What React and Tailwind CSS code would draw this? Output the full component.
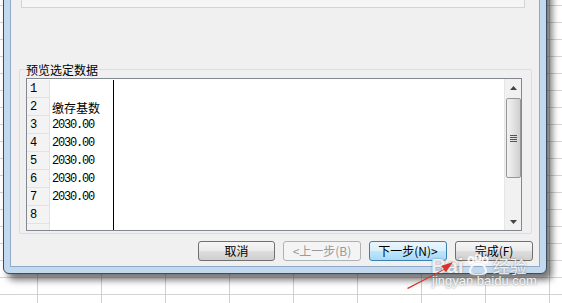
import React from "react";

const cjk = "font-['SimSun','Noto_Sans_CJK_SC',sans-serif]";

function Btn({ children, kind = "normal", w = "w-[77px]" }) {
  const styles = {
    normal:
      "border-[#707070] bg-[linear-gradient(to_bottom,#f6f6f6_0%,#ebebeb_48%,#dddddd_52%,#cfcfcf_100%)] text-black",
    disabled: "border-[#adb2b5] bg-[#f4f4f4] text-[#9a9a9a]",
    focus:
      "border-[#3c7fb1] bg-[linear-gradient(to_bottom,#eaf6fd_0%,#d9f0fc_48%,#bee6fd_52%,#a7d9f5_100%)] text-black",
  };
  return (
    <div
      className={`${w} h-[20px] rounded-[3px] border flex items-center justify-center text-[12px] leading-none ${cjk} ${styles[kind]}`}
    >
      {children}
    </div>
  );
}

const rows = [
  ["1", ""],
  ["2", "缴存基数"],
  ["3", "2030.00"],
  ["4", "2030.00"],
  ["5", "2030.00"],
  ["6", "2030.00"],
  ["7", "2030.00"],
  ["8", ""],
  ["", ""],
];

export default function App() {
  return (
    <div className="relative w-[562px] h-[303px] overflow-hidden bg-white bg-[linear-gradient(to_right,#cfcfcf_1px,transparent_1px),linear-gradient(to_bottom,#d4d4d4_1px,transparent_1px)] bg-[size:64px_17px] bg-[position:37px_5px]">
      {/* dialog window */}
      <div className="absolute left-[3px] top-[-30px] w-[544px] h-[304px] rounded-b-[6px] border border-[#3e4d5e] bg-[#c3d9ef] p-[6px] shadow-[5px_6px_7px_rgba(0,0,0,0.55)]">
        <div className="w-full h-full border border-[#8eaac8] bg-[#f0f0f0] flex flex-col">
          {/* previous panel (cut off at top) */}
          <div className="ml-[10px] w-[504px] h-[30px] border border-[#d4d4d4] bg-[#f5f5f5]" />

          {/* group box */}
          <div className="relative ml-[8px] mt-[61px] w-[513px] h-[165px] border border-[#d5dfe5] rounded-[2px]">
            <span className={`absolute left-[5px] top-[-7px] px-[1px] bg-[#f0f0f0] text-[12px] leading-[14px] text-black ${cjk}`}>
              预览选定数据
            </span>

            <div className="ml-[6px] mt-[8px] w-[496px] h-[153px] border border-[#828790] bg-white flex overflow-hidden">
              <div className="flex flex-col pt-[1px]">
                {rows.map(([n, v], i) => (
                  <div key={i} className="flex h-[18px] shrink-0">
                    <div className="w-[23px] h-[18px] bg-[#f3f3f3] border-b border-r border-[#e2e2e2] pl-[3px] text-[12px] leading-[18px] text-black font-['Liberation_Mono',monospace]">
                      {n}
                    </div>
                    <div
                      className={`w-[63px] pl-[2px] text-black ${
                        /\d/.test(v)
                          ? "text-[12px] tracking-[-1.2px] leading-[18px] font-['Liberation_Mono',monospace]"
                          : `text-[12px] leading-[20px] ${cjk}`
                      }`}
                    >
                      {v}
                    </div>
                  </div>
                ))}
              </div>
              <div className="w-[1px] mt-[1px] bg-black" />
              <div className="flex-1" />

              {/* vertical scrollbar */}
              <div className="w-[17px] border-l border-[#e6e6e6] bg-[#f1f1f1] flex flex-col items-center">
                <div className="h-[17px] w-full flex items-center justify-center">
                  <svg width="7" height="4" viewBox="0 0 7 4">
                    <path d="M0 4 L3.5 0 L7 4 Z" fill="#444" />
                  </svg>
                </div>
                <div className="mt-[2px] w-[15px] h-[80px] rounded-[2px] border border-[#979797] bg-[linear-gradient(to_right,#f2f2f2,#e2e2e2_50%,#cfcfcf)] flex items-center justify-center">
                  <div className="flex flex-col gap-[1px]">
                    <div className="w-[7px] h-[1px] bg-[#555]" />
                    <div className="w-[7px] h-[1px] bg-[#555]" />
                    <div className="w-[7px] h-[1px] bg-[#555]" />
                    <div className="w-[7px] h-[1px] bg-[#555]" />
                  </div>
                </div>
                <div className="flex-1" />
                <div className="h-[17px] w-full flex items-center justify-center">
                  <svg width="7" height="4" viewBox="0 0 7 4">
                    <path d="M0 0 L7 0 L3.5 4 Z" fill="#444" />
                  </svg>
                </div>
              </div>
            </div>
          </div>

          {/* buttons */}
          <div className="mt-[7px] flex justify-end gap-[8px] pr-[6px]">
            <Btn>取消</Btn>
            <Btn kind="disabled" w="w-[78px]">
              &lt;上一步(B)
            </Btn>
            <Btn kind="focus" w="w-[78px]">
              下一步(N)&gt;
            </Btn>
            <Btn w="w-[78px]">完成(F)</Btn>
          </div>
        </div>
      </div>

      {/* watermark */}
      <div className="absolute left-[431px] top-[254px] flex items-center text-white/85 [text-shadow:0_0_2px_rgba(90,90,90,0.7)]">
        <span className="text-[21px] font-bold leading-none font-['Liberation_Sans',sans-serif]">Bai</span>
        <svg width="26" height="22" viewBox="0 0 26 22" className="ml-[1px] opacity-85">
          <g fill="none" stroke="#ffffff" strokeWidth="2">
            <ellipse cx="6" cy="6" rx="2.5" ry="3" />
            <ellipse cx="13" cy="4" rx="2.5" ry="3" />
            <ellipse cx="20" cy="6" rx="2.5" ry="3" />
            <path d="M5 18 C5 12 9 10 13 10 C17 10 21 12 21 18 C21 21 5 21 5 18 Z" />
          </g>
        </svg>
        <span className={`ml-[2px] text-[17px] leading-none ${cjk}`}>经验</span>
      </div>
      <div className="absolute left-[432px] top-[274px] text-[13px] leading-[14px] text-white/90 font-['Liberation_Sans',sans-serif] [text-shadow:0_0_2px_rgba(90,90,90,0.8)]">
        jingyan.baidu.com
      </div>

      {/* red arrow */}
      <svg className="absolute left-[400px] top-[258px]" width="60" height="34" viewBox="0 0 60 34">
        <path d="M7 30 L44 11 L41 8 L53 4 L46 14 L44 12 L8 31 Z" fill="#d9322a" />
      </svg>
    </div>
  );
}
